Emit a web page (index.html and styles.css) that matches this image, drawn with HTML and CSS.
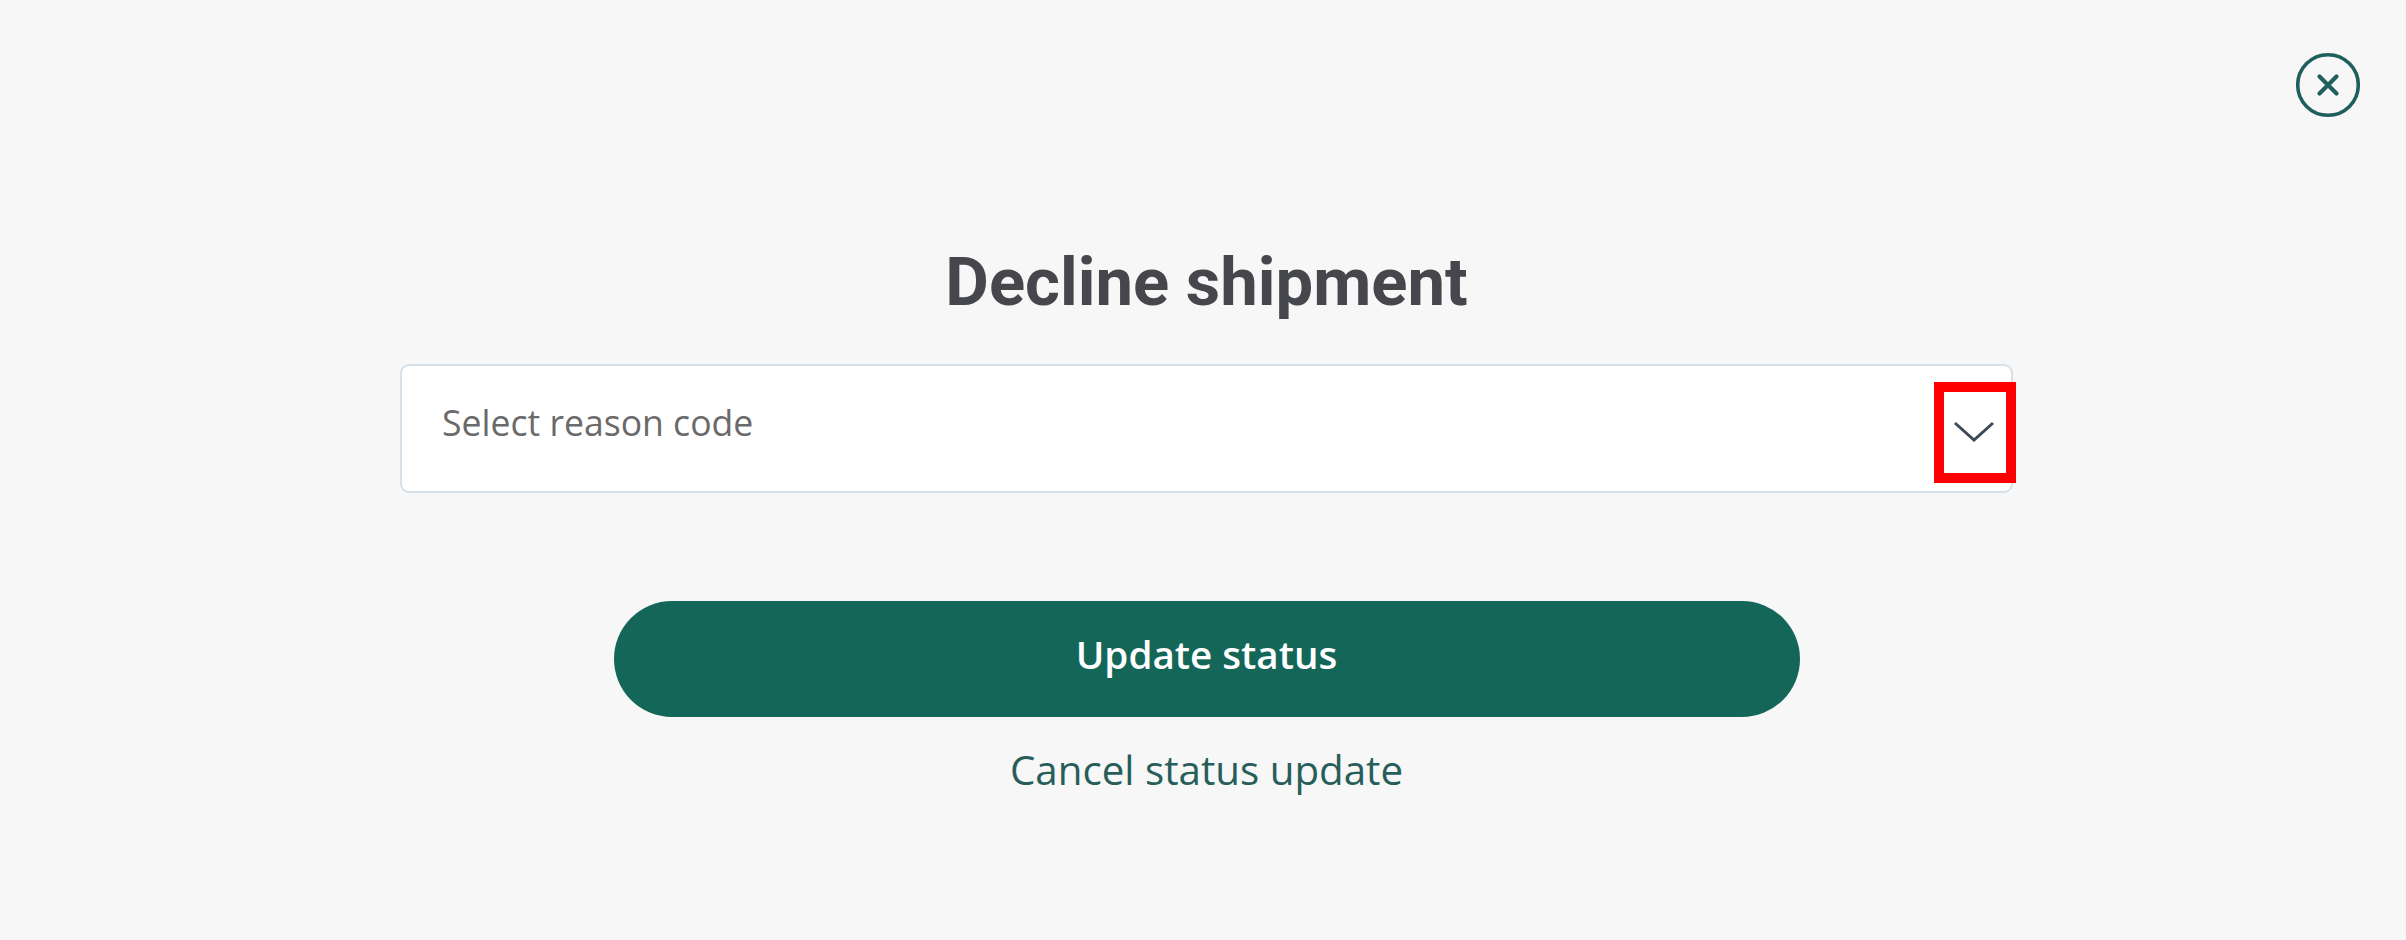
FILE: index.html
```html
<!DOCTYPE html>
<html lang="en">
<head>
  <meta charset="UTF-8" />
  <meta name="viewport" content="width=device-width, initial-scale=1.0" />
  <title>Decline shipment</title>
  <link rel="stylesheet" href="styles.css">
</head>
<body>
  <div class="modal">
    <div class="modal-header">
      <button class="close-btn" aria-label="Close">
        <svg width="66" height="66" viewBox="0 0 66 66">
          <circle cx="33" cy="33" r="30.3" fill="none" stroke="#1f5f5d" stroke-width="3.6"/>
          <path d="M24.5 24.5 L41.5 41.5 M41.5 24.5 L24.5 41.5" stroke="#1f5f5d" stroke-width="4.2" stroke-linecap="round"/>
        </svg>
      </button>
    </div>

    <div class="modal-body">
      <h1>Decline shipment</h1>

      <div class="select-box">
        <span class="placeholder">Select reason code</span>
        <svg class="chevron" width="42" height="24" viewBox="0 0 42 24">
          <path d="M2 3 L21 20 L40 3" fill="none" stroke="#3e4957" stroke-width="3"/>
        </svg>
        <div class="highlight"></div>
      </div>

      <button class="primary-btn">Update status</button>
      <a class="cancel-link" href="#">Cancel status update</a>
    </div>
  </div>
</body>
</html>
```

FILE: styles.css
```css
body {
  margin: 0;
  background: #f7f7f7;
  font-family: "Open Sans", "Noto Sans", sans-serif;
  height: 940px;
  overflow: hidden;
}

.modal {
  padding-left: 7px;
}

.modal-header {
  display: flex;
  justify-content: flex-end;
  padding: 52px 45px 0 0;
}

.close-btn {
  border: none;
  background: transparent;
  padding: 0;
  width: 66px;
  height: 66px;
  cursor: pointer;
}

.close-btn svg {
  display: block;
}

.modal-body {
  display: flex;
  flex-direction: column;
  align-items: center;
}

h1 {
  margin: 124px 0 0;
  font-family: Roboto, "Liberation Sans", sans-serif;
  font-weight: 700;
  font-size: 67px;
  line-height: 80px;
  color: #45474d;
}

.select-box {
  position: relative;
  box-sizing: border-box;
  width: 1613px;
  height: 129px;
  margin-top: 42px;
  background: #fff;
  border: 2px solid #d6e0e9;
  border-radius: 9px;
  display: flex;
  justify-content: space-between;
  align-items: flex-start;
  padding: 32px 16px 0 40px;
}

.placeholder {
  font-size: 35.6px;
  color: #6a6a6a;
}

.chevron {
  margin-top: 22px;
}

.highlight {
  position: absolute;
  left: 1532px;
  top: 16px;
  width: 62px;
  height: 81px;
  border: 10px solid #ff0000;
}

.primary-btn {
  margin-top: 108px;
  width: 1186px;
  height: 116px;
  border: none;
  border-radius: 58px;
  background: #146659;
  color: #fff;
  font-family: "Open Sans", "Noto Sans", sans-serif;
  font-weight: 600;
  font-size: 38.6px;
  padding: 0 0 10px;
  cursor: pointer;
}

.cancel-link {
  margin-top: 25px;
  font-size: 40.3px;
  color: #275e5a;
  text-decoration: none;
}
```
